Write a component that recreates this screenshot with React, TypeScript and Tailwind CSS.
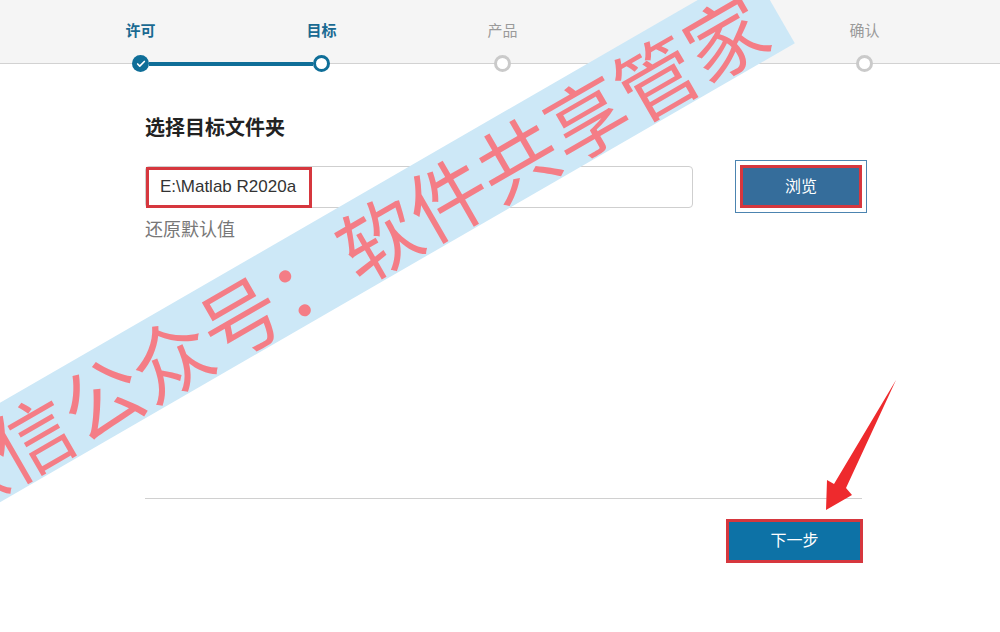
import { Check } from "lucide-react";

const steps = [
  { label: "许可", state: "done" },
  { label: "目标", state: "current" },
  { label: "产品", state: "todo" },
  { label: "选项", state: "todo" },
  { label: "确认", state: "todo" },
];

function StepDot({ state }: { state: string }) {
  if (state === "done") {
    return (
      <div className="flex h-[17px] w-[17px] flex-none items-center justify-center rounded-full bg-[#0f6e98]">
        <Check className="h-[10px] w-[10px] text-white" strokeWidth={4} />
      </div>
    );
  }
  if (state === "current") {
    return <div className="h-[17px] w-[17px] flex-none rounded-full border-[3px] border-[#0f6e98] bg-white" />;
  }
  return <div className="h-[17px] w-[17px] flex-none rounded-full border-[3px] border-[#cacaca] bg-white" />;
}

export default function App() {
  return (
    <div className="relative h-[632px] w-[1000px] overflow-hidden bg-white font-['Liberation_Sans','Noto_Sans_CJK_SC',sans-serif]">
      {/* Stepper header */}
      <header className="h-[64px] border-b border-[#d2d2d2] bg-[#f5f5f5]">
        <div className="ml-[50px] grid w-[905px] grid-cols-5 pt-[22px]">
          {steps.map((s) => (
            <div
              key={s.label}
              className={
                s.state === "todo"
                  ? "text-center text-[15px] leading-[18px] text-[#9a9a9a]"
                  : "text-center text-[15px] font-bold leading-[18px] text-[#1a6a92]"
              }
            >
              {s.label}
            </div>
          ))}
        </div>
        <div className="ml-[132px] mt-[15px] flex items-center">
          <StepDot state="done" />
          <div className="h-[4px] w-[164px] flex-none bg-[#0f6e98]" />
          <StepDot state="current" />
          <div className="w-[164px] flex-none" />
          <StepDot state="todo" />
          <div className="w-[164px] flex-none" />
          <StepDot state="todo" />
          <div className="w-[164px] flex-none" />
          <StepDot state="todo" />
        </div>
      </header>

      {/* Folder selection */}
      <main className="pl-[145px]">
        <h1 className="mt-[50px] text-[20px] font-bold leading-[28px] text-[#222]">选择目标文件夹</h1>

        <div className="mt-[18px] flex items-center">
          <div className="relative flex h-[42px] w-[548px] flex-none items-center rounded-[4px] border border-[#cfcfcf] bg-white pl-[14px] text-[17px] text-[#333]">
            E:\Matlab R2020a
            <div className="absolute left-0 top-0 h-[41px] w-[166px] border-[3px] border-[#d6373e]" />
          </div>
          <div className="ml-[42px] flex-none border border-[#4c84b0] p-[4px]">
            <button className="flex h-[43px] w-[122px] items-center justify-center border-[3px] border-[#d6373e] bg-[#356d9b] text-[16px] text-white">
              浏览
            </button>
          </div>
        </div>

        <p className="mt-[5px] text-[18px] leading-[24px] text-[#777]">还原默认值</p>

        <div className="mt-[256px] h-px w-[717px] bg-[#d0d0d0]" />

        <div className="mt-[20px] flex w-[718px] justify-end">
          <button className="flex h-[44px] w-[137px] items-center justify-center border-[3px] border-[#d6373e] bg-[#0d72a6] text-[16px] text-white">
            下一步
          </button>
        </div>
      </main>

      {/* Watermark band */}
      <div className="absolute left-[-253px] top-[238px] flex h-[86px] w-[1100px] -rotate-30 items-center whitespace-nowrap bg-[#cde8f7] pl-[122px] font-['Noto_Sans_CJK_SC',sans-serif] text-[80px] leading-none text-[#f47d86]">
        微信公众号：软件共享管家
      </div>

      {/* Red arrow annotation */}
      <svg className="pointer-events-none absolute left-0 top-0" width="1000" height="632" viewBox="0 0 1000 632">
        <path d="M896 380 L846 488 L852 495 L826 510 L827 480 L834 484 Z" fill="#ee2a2d" />
      </svg>
    </div>
  );
}
